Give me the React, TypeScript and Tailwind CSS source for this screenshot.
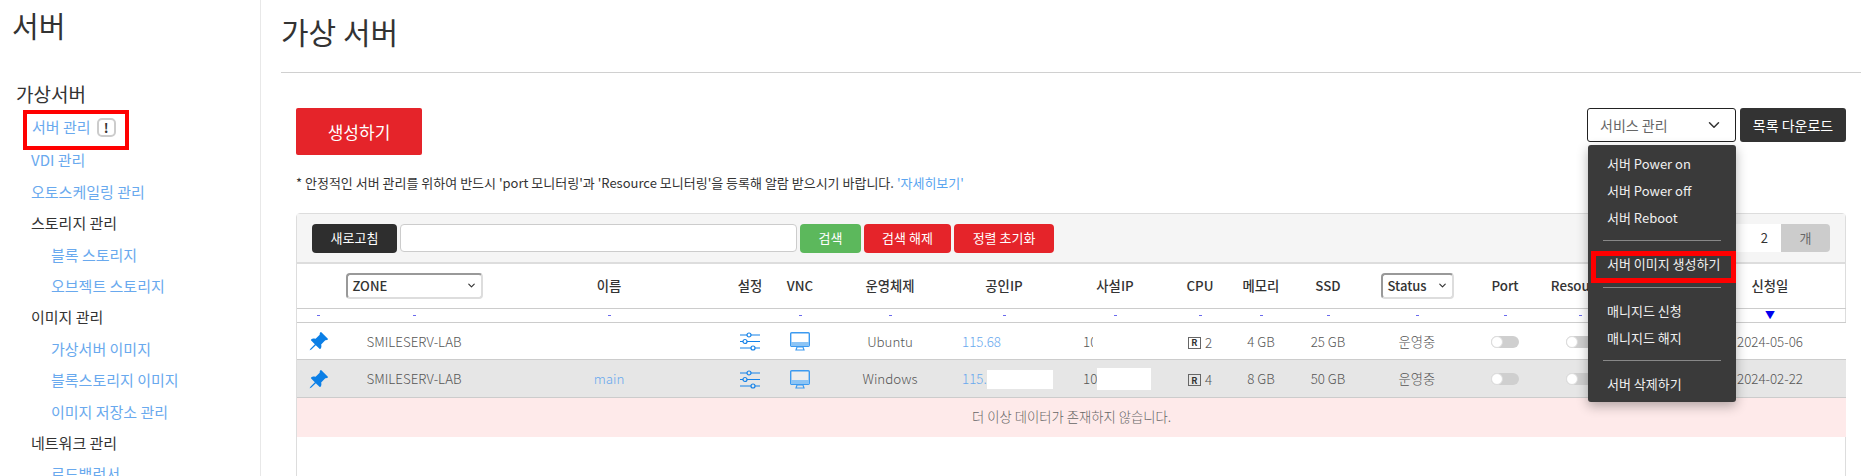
import React from 'react';
import { BsPinAngleFill } from 'react-icons/bs';
import { ChevronDown } from 'lucide-react';

const FONT = 'font-["Noto_Sans_CJK_KR","Noto_Sans",sans-serif]';

const SlidersIcon = () => (
    <svg width="20" height="19" viewBox="0 0 20 19" fill="none" stroke="#1582e8" strokeWidth="1.2" className="mx-auto">
        <path d="M0 3h7M11 3h9M0 9.5h3M7 9.5h13M0 16h11M15 16h5" />
        <circle cx="9" cy="3" r="2" />
        <circle cx="5" cy="9.5" r="2" />
        <circle cx="13" cy="16" r="2" />
    </svg>
);

const MonitorIcon = () => (
    <svg width="20" height="19" viewBox="0 0 20 19" className="mx-auto">
        <rect x="0.7" y="0.7" width="18.6" height="13.6" rx="1" fill="#fff" fillOpacity="0.3" stroke="#3c9af0" strokeWidth="1.4" />
        <rect x="1" y="10" width="18" height="4" fill="#8cc4f5" />
        <path d="M7 15h6l1 3H6z" fill="none" stroke="#3c9af0" strokeWidth="1.2" />
    </svg>
);

const Toggle = () => (
    <span className="flex h-[12px] w-[28px] rounded-full bg-[#cfcfcf]">
        <span className="h-[12px] w-[12px] rounded-full border border-[#ddd] bg-white" />
    </span>
);

const Cpu = ({ n }: { n: string }) => (
    <span className="inline-flex items-center gap-[4px]">
        <span className="flex h-[12px] w-[13px] items-center justify-center border border-[#666] text-[9px] leading-none font-bold text-[#333]">R</span>
        {n}
    </span>
);

const Select = ({ label, width }: { label: string; width: string }) => (
    <span className={`mx-auto flex h-[26px] items-center justify-between rounded-[4px] border-2 border-[#ddd] border-t-[#999] border-l-[#999] bg-white pr-[4px] pl-[5px] text-[13px] font-medium text-[#333] ${width}`}>
        {label}
        <ChevronDown size={11} strokeWidth={2.5} />
    </span>
);

const Dash = () => <span className="mx-auto block h-px w-[3px] bg-[#6a6aee]" />;

const sideItems = [
    { label: 'VDI 관리', type: 'link' },
    { label: '오토스케일링 관리', type: 'link' },
    { label: '스토리지 관리', type: 'head' },
    { label: '블록 스토리지', type: 'sub' },
    { label: '오브젝트 스토리지', type: 'sub' },
    { label: '이미지 관리', type: 'head' },
    { label: '가상서버 이미지', type: 'sub' },
    { label: '블록스토리지 이미지', type: 'sub' },
    { label: '이미지 저장소 관리', type: 'sub' },
    { label: '네트워크 관리', type: 'head' },
    { label: '로드밸런서', type: 'sub' },
];

const cols = [
    'w-[42px]', 'w-[150px]', 'w-[240px]', 'w-[42px]', 'w-[58px]', 'w-[122px]', 'w-[106px]', 'w-[116px]',
    'w-[54px]', 'w-[68px]', 'w-[66px]', 'w-[112px]', 'w-[64px]', 'w-[86px]', 'w-[71px]', 'w-[152px]',
];

const rows = [
    { name: '', os: 'Ubuntu', ip: '115.68', pip: '10', cpu: '2', mem: '4 GB', ssd: '25 GB', date: '2024-05-06', bg: 'bg-white' },
    { name: 'main', os: 'Windows', ip: '115.', pip: '10', cpu: '4', mem: '8 GB', ssd: '50 GB', date: '2024-02-22', bg: 'bg-[#e6e6e6]' },
];

export default function App() {
    return (
        <div className={`flex h-[476px] overflow-hidden bg-white ${FONT}`}>
            <aside className="h-full w-[261px] shrink-0 overflow-hidden border-r border-[#e8e8e8]">
                <h1 className="pt-[5px] pl-[12px] text-[29px] leading-[40px] font-normal text-[#333]">서버</h1>
                <h2 className="mt-[34px] pl-[16px] text-[19px] leading-[30px] text-[#333]">가상서버</h2>
                <div className="relative mt-[2px] ml-[32px] flex h-[33px] items-center gap-[6px] text-[15px] text-[#69a9ee]">
                    서버 관리
                    <span className="flex h-[19px] w-[19px] items-center justify-center rounded-[5px] border-2 border-[#ccc] text-[13px] font-bold text-[#333]">!</span>
                    <span className="absolute top-[-1px] left-[-9px] h-[40px] w-[106px] border-4 border-[#ff0000]" />
                </div>
                <nav className="mt-[1px] flex flex-col">
                    {sideItems.map(item => (
                        <div
                            key={item.label}
                            className={`flex h-[31.4px] shrink-0 items-center text-[15px] ${item.type === 'sub' ? 'pl-[51px]' : 'pl-[31px]'} ${item.type === 'head' ? 'text-[#333]' : 'text-[#69a9ee]'}`}
                        >
                            {item.label}
                        </div>
                    ))}
                </nav>
            </aside>

            <main className="min-w-0 flex-1 pr-[10px] pl-[20px]">
                <div className="h-[73px] border-b border-[#d0d0d0] pt-[9px]">
                    <h1 className="text-[30px] leading-[44px] font-normal text-[#333]">가상 서버</h1>
                </div>

                <div className="px-[15px]">
                    <div className="mt-[35px] flex items-start justify-between">
                        <button className="h-[47px] w-[126px] rounded-[2px] bg-[#e5242a] text-[17px] text-white">생성하기</button>
                        <div className="relative z-10 flex gap-[4px]">
                            <div className="flex h-[34px] w-[149px] items-center justify-between rounded-[3px] border border-[#222] bg-white pr-[12px] pl-[12px] text-[14px] text-[#666]">
                                서비스 관리
                                <ChevronDown size={18} strokeWidth={2} className="text-[#333]" />
                            </div>
                            <button className="h-[34px] w-[106px] rounded-[3px] bg-[#333] text-[14px] text-white">목록 다운로드</button>

                            <div className="absolute top-[37px] left-px w-[148px] rounded-[3px] bg-[#3a3a3a] pt-[5px] pb-[5px] text-[13px] text-[#f0f0f0] shadow-[0_4px_12px_rgba(0,0,0,0.3)]">
                                <div className="flex h-[27px] items-center pl-[19px]">서버 Power on</div>
                                <div className="flex h-[27px] items-center pl-[19px]">서버 Power off</div>
                                <div className="flex h-[27px] items-center pl-[19px]">서버 Reboot</div>
                                <div className="mx-[15px] mt-[9px] border-t border-[#888]" />
                                <div className="relative mt-[9px] flex h-[27px] items-center pl-[19px]">
                                    서버 이미지 생성하기
                                    <span className="absolute top-[1px] left-[3px] h-[32px] w-[145px] border-[5px] border-[#ff0000]" />
                                </div>
                                <div className="mx-[15px] mt-[10px] border-t border-[#888]" />
                                <div className="mt-[9px] flex h-[27px] items-center pl-[19px]">매니지드 신청</div>
                                <div className="flex h-[27px] items-center pl-[19px]">매니지드 해지</div>
                                <div className="mx-[15px] mt-[9px] border-t border-[#888]" />
                                <div className="mt-[9px] flex h-[27px] items-center pl-[19px]">서버 삭제하기</div>
                            </div>
                        </div>
                    </div>

                    <p className="mt-[17px] text-[13px] leading-[22px] text-[#333]">
                        * 안정적인 서버 관리를 위하여 반드시 'port 모니터링'과 'Resource 모니터링'을 등록해 알람 받으시기 바랍니다. <span className="text-[#5aa5f0]">'자세히보기'</span>
                    </p>

                    <section className="mt-[19px] h-[300px] rounded-t-[4px] border border-[#ddd]">
                        <div className="flex h-[50px] items-center gap-[3px] border-b-2 border-[#ddd] bg-[#f5f5f5] pr-[15px] pl-[15px]">
                            <button className="h-[29px] w-[85px] rounded-[4px] bg-[#2e2e2e] text-[13px] text-white">새로고침</button>
                            <input className="h-[28px] w-[397px] rounded-[4px] border border-[#ccc] bg-white" />
                            <button className="h-[29px] w-[61px] rounded-[4px] bg-[#5cb85c] text-[13px] text-white">검색</button>
                            <button className="h-[29px] w-[87px] rounded-[4px] bg-[#e5242a] text-[13px] text-white">검색 해제</button>
                            <button className="h-[29px] w-[100px] rounded-[4px] bg-[#e5242a] text-[13px] text-white">정렬 초기화</button>
                            <div className="ml-auto flex h-[28px] items-stretch">
                                <span className="flex w-[45px] items-center justify-end bg-white pr-[13px] text-[13px] text-[#333]">2</span>
                                <span className="flex w-[49px] items-center justify-center rounded-r-[4px] bg-[#ccc] text-[13px] text-[#666]">개</span>
                            </div>
                        </div>

                        <table className="w-full table-fixed border-collapse text-[13.33px]">
                            <colgroup>
                                {cols.map((w, i) => <col key={i} className={w} />)}
                            </colgroup>
                            <thead className="text-[#333]">
                                <tr className="h-[44px] border-b border-[#ccc] text-center font-medium">
                                    <th />
                                    <th className="font-medium"><Select label="ZONE" width="w-[137px]" /></th>
                                    {['이름', '설정', 'VNC', '운영체제', '공인IP', '사설IP', 'CPU', '메모리', 'SSD'].map(h => (
                                        <th key={h} className="font-medium">{h}</th>
                                    ))}
                                    <th className="font-medium"><Select label="Status" width="w-[73px]" /></th>
                                    <th className="font-medium">Port</th>
                                    <th className="font-medium">Resource</th>
                                    <th />
                                    <th className="font-medium">신청일</th>
                                </tr>
                                <tr className="h-[14px] border-b border-[#ccc]">
                                    {cols.map((_, i) => (
                                        <td key={i} className="p-0 leading-none">
                                            {i === 15
                                                ? <span className="block text-center text-[10px] leading-[12px] text-[#0000ee]">▼</span>
                                                : i === 3 || i === 14 ? null : <Dash />}
                                        </td>
                                    ))}
                                </tr>
                            </thead>
                            <tbody className="text-center font-light text-[#555]">
                                {rows.map(r => (
                                    <tr key={r.date} className={`h-[37.5px] border-b border-[#ccc] [&>td]:pt-[2px] ${r.bg}`}>
                                        <td><BsPinAngleFill size={21} color="#0b7fe6" className="mx-auto" /></td>
                                        <td>SMILESERV-LAB</td>
                                        <td className="text-[#69a9ee]">{r.name}</td>
                                        <td><SlidersIcon /></td>
                                        <td><MonitorIcon /></td>
                                        <td>{r.os}</td>
                                        <td className="pl-[11px] text-left text-[#69a9ee]">
                                            {r.name ? (
                                                <span className="flex items-center">
                                                    {r.ip}
                                                    <span className="h-[19px] w-[66px] bg-white" />
                                                </span>
                                            ) : r.ip}
                                        </td>
                                        <td className="pl-[26px] text-left">
                                            {r.name ? (
                                                <span className="flex items-center">
                                                    {r.pip}
                                                    <span className="h-[22px] w-[54px] bg-white" />
                                                </span>
                                            ) : <span className="block w-[10px] overflow-hidden">{r.pip}</span>}
                                        </td>
                                        <td><Cpu n={r.cpu} /></td>
                                        <td>{r.mem}</td>
                                        <td>{r.ssd}</td>
                                        <td>운영중</td>
                                        <td><span className="flex justify-center"><Toggle /></span></td>
                                        <td><span className="flex justify-center"><Toggle /></span></td>
                                        <td />
                                        <td>{r.date}</td>
                                    </tr>
                                ))}
                                <tr className="h-[40px] bg-[#feeaea]">
                                    <td colSpan={16} className="text-[#666]">더 이상 데이터가 존재하지 않습니다.</td>
                                </tr>
                            </tbody>
                        </table>
                    </section>
                </div>
            </main>
        </div>
    );
}
